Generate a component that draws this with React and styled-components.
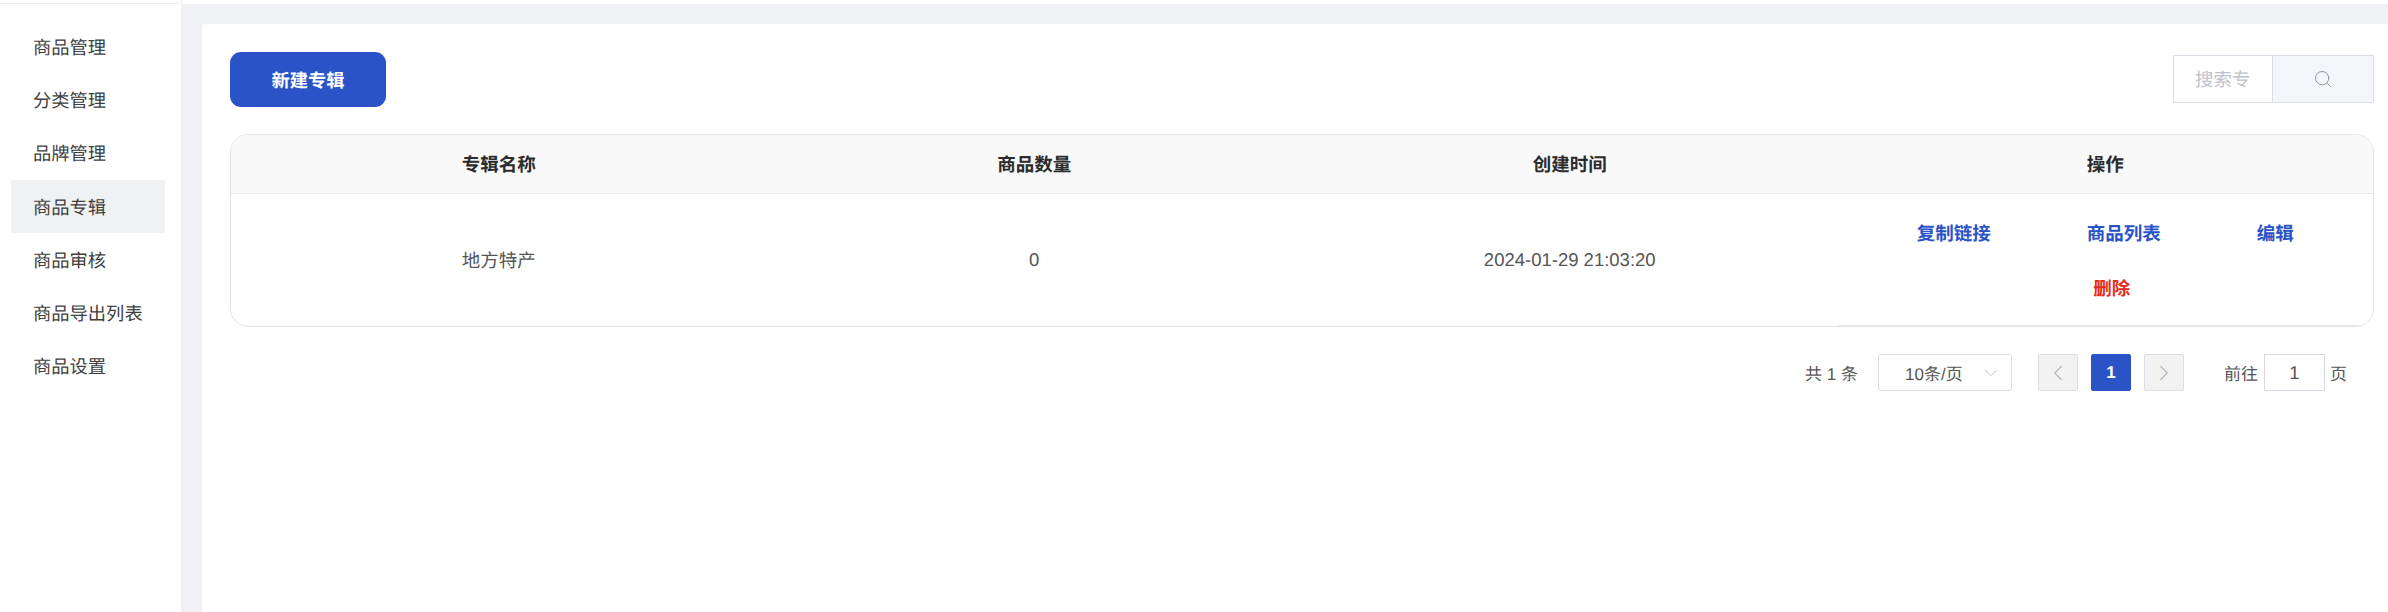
import React from 'react';
import styled, { createGlobalStyle } from 'styled-components';
import { Search, ChevronLeft, ChevronRight, ChevronDown } from 'lucide-react';

const Global = createGlobalStyle`
  html, body { margin: 0; padding: 0; background: #fff; }
  body { font-family: "Liberation Sans", "Noto Sans CJK SC", sans-serif; font-size: 18.5px; color: #555; text-rendering: geometricPrecision; }
  * { box-sizing: border-box; }
`;

const Page = styled.div`
  width: 2388px; height: 612px; display: flex; flex-direction: column; overflow: hidden;
`;
const TopStrip = styled.div`
  height: 4px; background: #fff; flex: none;
`;
const TopRule = styled.div`
  width: 182px; height: 4px; border-bottom: 1px solid #eceef1; border-right: 1px solid #eceef1;
`;
const Body = styled.div`
  flex: 1; display: flex; min-height: 0;
`;
const Sidebar = styled.nav`
  width: 181px; padding: 16px 16px 0 11px; background: #fff; display: flex; flex-direction: column;
`;
const NavItem = styled.div`
  height: 53.3px; display: flex; align-items: center; padding-left: 22px; border-radius: 3px;
  font-size: 18.3px; color: #3f3f3f; background: ${p => (p.$active ? '#f0f1f3' : 'transparent')};
`;
const Main = styled.main`
  flex: 1; background: #eff0f4; padding: 20px 0 0 21px; min-width: 0;
`;
const Card = styled.section`
  background: #fff; height: 100%; padding: 28px 14px 0 28px; border-radius: 3px 0 0 0;
`;
const Toolbar = styled.div`
  display: flex; justify-content: space-between; align-items: flex-start; height: 82px;
`;
const PrimaryButton = styled.button`
  width: 156px; height: 55px; border: 0; border-radius: 11px; background: #2953c6; color: #fff;
  font: 700 18.3px "Liberation Sans", "Noto Sans CJK SC", sans-serif;
  text-rendering: geometricPrecision;
`;
const SearchBox = styled.div`
  display: flex; height: 48px; border: 1px solid #dcdee6; margin-top: 3px;
`;
const SearchField = styled.div`
  width: 98px; display: flex; align-items: center; padding-left: 21px; color: #c0c2cb;
`;
const SearchBtn = styled.div`
  width: 101px; display: flex; align-items: center; justify-content: center; background: #f4f5f9; border-left: 1px solid #dcdee6; color: #8c8e96;
`;
const Table = styled.div`
  border: 1px solid #e2e3ea; border-radius: 18px; overflow: hidden;
`;
const Row = styled.div`
  display: grid; grid-template-columns: repeat(4, 1fr);
`;
const HeadRow = styled(Row)`
  height: 59px; background: #f9f9fa; border-bottom: 1px solid #e5e6eb;
`;
const Cell = styled.div`
  display: flex; align-items: center; justify-content: center; text-align: center;
`;
const HeadCell = styled(Cell)`
  font-weight: 700; color: #2b2b2b;
`;
const BodyRow = styled(Row)`
  height: 132px;
`;
const Ops = styled.div`
  display: flex; flex-wrap: wrap; justify-content: center; align-content: center; row-gap: 28px;
  padding-top: 2px; border-bottom: 1px solid #e8ebf0;
`;
const OpLink = styled.a`
  padding: 0 ${p => (p.$danger ? '42px' : '48px')} 0 ${p => (p.$danger ? '55px' : '48px')};
  line-height: 27px; font-weight: 700; color: ${p => (p.$danger ? '#e32d1c' : '#2953c6')};
`;
const Pager = styled.div`
  display: flex; justify-content: flex-end; align-items: center; height: 37px; margin-top: 27px; padding-right: 27px;
  font-size: 17px;
`;
const Total = styled.span`
  margin-right: 20px;
`;
const SizeSelect = styled.div`
  width: 134px; height: 37px; border: 1px solid #dcdee6; border-radius: 3px; display: flex; align-items: center; justify-content: space-between; padding: 0 9px 0 26px; margin-right: 26px; color: #555;
`;
const PageBtn = styled.div`
  width: 40px; height: 37px; display: flex; align-items: center; justify-content: center; border-radius: 2px;
  border: 1px solid ${p => (p.$active ? '#2953c6' : '#dcdee6')};
  background: ${p => (p.$active ? '#2953c6' : '#f2f2f3')};
  color: ${p => (p.$active ? '#fff' : '#b5b7c0')}; font-weight: 700;
  margin-right: 13px;
`;
const JumpLabel = styled.span`
  margin-left: ${p => p.$left || 0}px;
`;
const JumpInput = styled.div`
  width: 61px; height: 37px; border: 1px solid #d6d8e2; margin: 0 5px 0 6px; display: flex; align-items: center; justify-content: center; font-size: 18.5px;
`;

const nav = ['商品管理', '分类管理', '品牌管理', '商品专辑', '商品审核', '商品导出列表', '商品设置'];

export default function App() {
  return (
    <Page>
      <Global />
      <TopStrip><TopRule /></TopStrip>
      <Body>
        <Sidebar>
          {nav.map(n => <NavItem key={n} $active={n === '商品专辑'}>{n}</NavItem>)}
        </Sidebar>
        <Main>
          <Card>
            <Toolbar>
              <PrimaryButton>新建专辑</PrimaryButton>
              <SearchBox>
                <SearchField>搜索专</SearchField>
                <SearchBtn><Search size={20} strokeWidth={1.1} /></SearchBtn>
              </SearchBox>
            </Toolbar>
            <Table>
              <HeadRow>
                <HeadCell>专辑名称</HeadCell>
                <HeadCell>商品数量</HeadCell>
                <HeadCell>创建时间</HeadCell>
                <HeadCell>操作</HeadCell>
              </HeadRow>
              <BodyRow>
                <Cell>地方特产</Cell>
                <Cell>0</Cell>
                <Cell>2024-01-29 21:03:20</Cell>
                <Ops>
                  <OpLink>复制链接</OpLink>
                  <OpLink>商品列表</OpLink>
                  <OpLink>编辑</OpLink>
                  <OpLink $danger>删除</OpLink>
                </Ops>
              </BodyRow>
            </Table>
            <Pager>
              <Total>共 1 条</Total>
              <SizeSelect>10条/页<ChevronDown size={22} strokeWidth={0.9} color="#b5b7c0" /></SizeSelect>
              <PageBtn><ChevronLeft size={26} strokeWidth={1.1} /></PageBtn>
              <PageBtn $active>1</PageBtn>
              <PageBtn><ChevronRight size={26} strokeWidth={1.1} /></PageBtn>
              <JumpLabel $left={27}>前往</JumpLabel>
              <JumpInput>1</JumpInput>
              <JumpLabel>页</JumpLabel>
            </Pager>
          </Card>
        </Main>
      </Body>
    </Page>
  );
}
